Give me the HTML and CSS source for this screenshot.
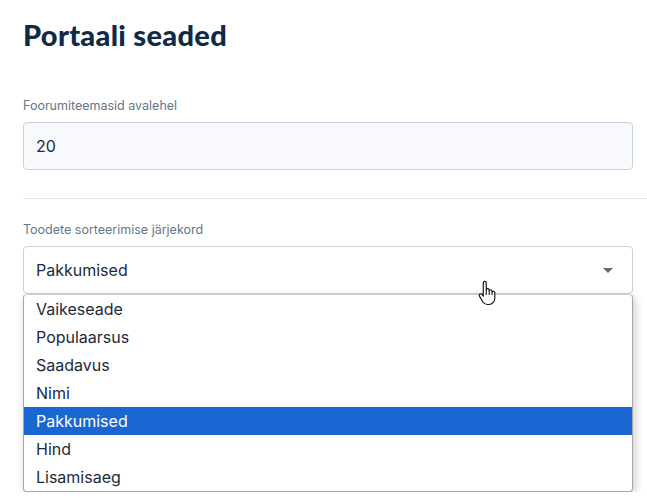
FILE: index.html
```html
<!DOCTYPE html>
<html lang="et">
<head>
    <meta charset="UTF-8">
    <title>Portaali seaded</title>
    <link rel="stylesheet" href="styles.css">
</head>
<body>
    <div class="page">
        <h1>Portaali seaded</h1>

        <div class="field">
            <label class="field-label">Foorumiteemasid avalehel</label>
            <div class="input">20</div>
        </div>

        <hr class="divider">

        <div class="field">
            <label class="field-label">Toodete sorteerimise järjekord</label>
            <div class="select-wrap">
                <div class="select">
                    <span>Pakkumised</span>
                    <span class="arrow"></span>
                </div>
                <ul class="options">
                    <li>Vaikeseade</li>
                    <li>Populaarsus</li>
                    <li>Saadavus</li>
                    <li>Nimi</li>
                    <li class="selected">Pakkumised</li>
                    <li>Hind</li>
                    <li>Lisamisaeg</li>
                </ul>
                <!-- hiire kursor -->
                <svg class="cursor" width="19" height="26" viewBox="0 0 18 24">
                    <path d="M5 2.5c0-.9.6-1.5 1.4-1.5s1.4.6 1.4 1.5V9c.2-.7.8-1.1 1.4-1.1.8 0 1.4.6 1.4 1.4v.6c.2-.6.7-1 1.3-1 .8 0 1.4.6 1.4 1.4v.9c.2-.5.7-.9 1.3-.9.8 0 1.3.6 1.3 1.4v5.2c0 3.4-2.4 6-5.6 6H9c-1.9 0-3.3-.9-4.4-2.4L1.4 15c-.5-.7-.3-1.6.4-2 .6-.4 1.4-.3 1.9.3L5 15V2.5z" fill="#fff" stroke="#111" stroke-width="1.1" stroke-linejoin="round"/>
                    <path d="M7.8 9v5M10.6 10v4M13.3 11v3" stroke="#111" stroke-width="1"/>
                </svg>
            </div>
        </div>
    </div>
</body>
</html>
```

FILE: styles.css
```css
body {
    margin: 0;
    background: #fff;
    font-family: Inter, "Noto Sans", sans-serif;
    color: #1b2a3d;
}
.page {
    padding: 15px 14px 0 23px;
}
h1 {
    margin: 0;
    font-family: Lato, sans-serif;
    font-weight: 900;
    font-size: 29px;
    letter-spacing: 0.3px;
    line-height: 40px;
    color: #0e2a47;
}
.field {
    margin-top: 43px;
}
.field-label {
    display: block;
    font-size: 12.5px;
    line-height: 16px;
    color: #66758a;
    margin-bottom: 8px;
}
.input {
    height: 48px;
    box-sizing: border-box;
    border: 1px solid #c8d2df;
    border-radius: 4px;
    background: #f7f9fc;
    padding: 0 12px;
    display: flex;
    align-items: center;
    font-size: 16px;
}
.divider {
    border: 0;
    border-top: 1px solid #e6ebf1;
    margin: 28px -14px 0 0;
}
.divider + .field {
    margin-top: 23px;
}
.select-wrap {
    position: relative;
}
.select {
    height: 48px;
    box-sizing: border-box;
    border: 1px solid #c8d2df;
    border-radius: 4px;
    background: #fff;
    padding: 0 12px;
    display: flex;
    align-items: center;
    justify-content: space-between;
    font-size: 16px;
}
.arrow {
    width: 0;
    height: 0;
    border-left: 5px solid transparent;
    border-right: 5px solid transparent;
    border-top: 5px solid #5b6b80;
    margin-right: 7px;
}
.options {
    display: block;
    margin: 0;
    padding: 0;
    list-style: none;
    background: #fff;
    border: 1px solid #a7a7a7;
    border-top-color: #d0d0d0;
    border-radius: 4px;
    box-shadow: 2px 3px 8px rgba(0, 0, 0, 0.2);
    overflow: hidden;
}
.options li {
    height: 28px;
    line-height: 28px;
    padding: 0 12px;
    font-size: 16px;
    color: #1b2a3d;
}
.options li.selected {
    background: #1a67d2;
    color: #fff;
}
.cursor {
    position: absolute;
    left: 455px;
    top: 34px;
}
```
